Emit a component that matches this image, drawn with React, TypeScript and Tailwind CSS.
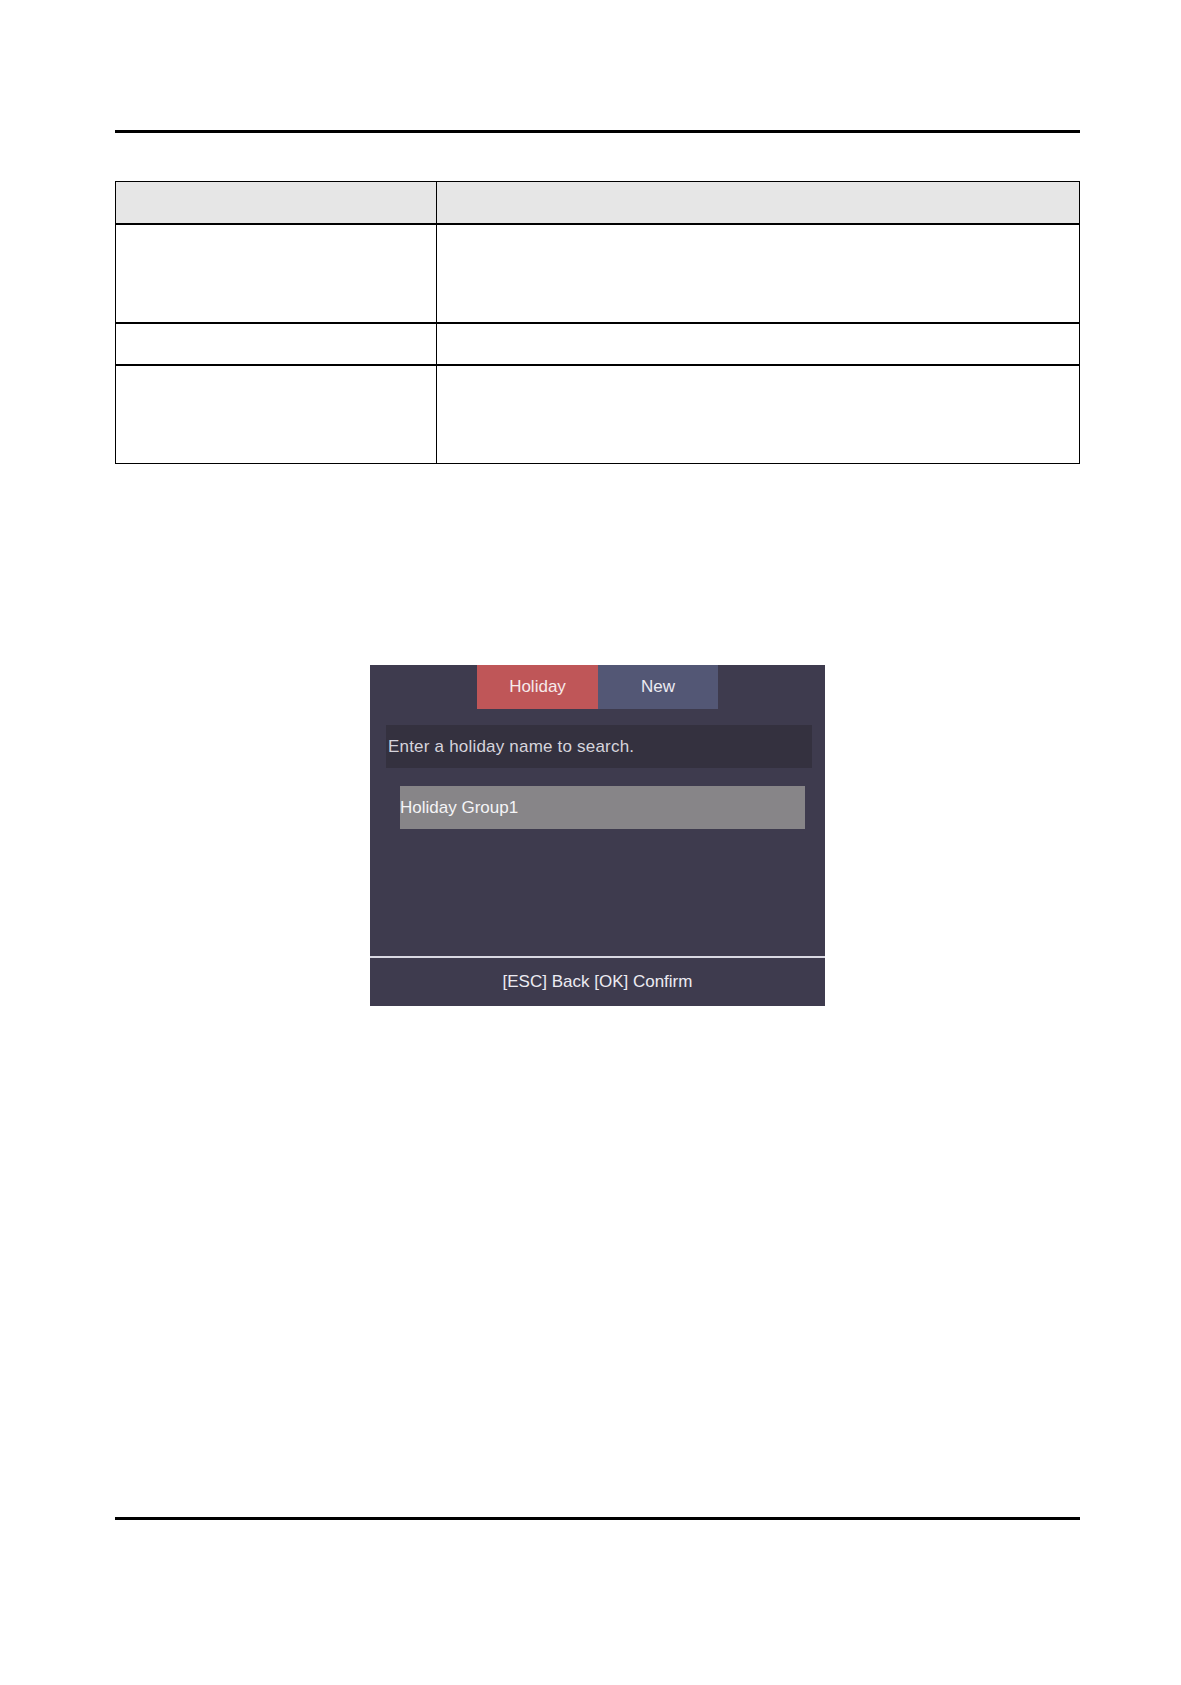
// Manual page: holiday group table + device screen capture
const rows = [
  { h: 'h-[99px]' },
  { h: 'h-[42px]' },
  { h: 'h-[99px]' },
];

function DeviceScreen() {
  return (
    <div className="mx-auto flex h-[341px] w-[455px] flex-col bg-[#3e3b4e] text-[#ecebf2]">
      {/* tabs */}
      <div className="ml-[107px] flex">
        <div className="flex h-[44px] w-[121px] items-center justify-center bg-[#bf5658] text-[17px] text-[#f6e9ea]">
          Holiday
        </div>
        <div className="flex h-[44px] w-[120px] items-center justify-center bg-[#535775] text-[17px]">
          New
        </div>
      </div>

      {/* search */}
      <div className="ml-[16px] mr-[13px] mt-[16px] flex h-[43px] items-center bg-[#34313f] pl-[2px] text-[17px] tracking-[0.2px] text-[#d6d4dc]">
        Enter a holiday name to search.
      </div>

      {/* list */}
      <div className="ml-[30px] mr-[20px] mt-[18px] flex h-[43px] items-center bg-[#878588] text-[17px] text-[#f4f4f6]">
        Holiday Group1
      </div>

      <div className="mt-auto flex h-[50px] items-center justify-center border-t-2 border-[#d9d8e2] text-[17px]">
        [ESC] Back [OK] Confirm
      </div>
    </div>
  );
}

export default function App() {
  return (
    <div
      className="h-[1685px] w-[1181px] bg-white pt-[130px]"
      style={{ fontFamily: '"Liberation Sans", Arial, sans-serif' }}
    >
      <div className="ml-[115px] w-[965px]">
        <div className="h-[3px] bg-black" />

        <div className="mt-[48px] border border-black">
          <div className="grid h-[41px] grid-cols-[321px_1fr] bg-[#e6e6e6]">
            <div className="border-r border-black" />
            <div />
          </div>
          {rows.map((r, i) => (
            <div key={i} className={`grid grid-cols-[321px_1fr] border-t-2 border-black ${r.h}`}>
              <div className="border-r border-black" />
              <div />
            </div>
          ))}
        </div>

        <div className="mt-[201px]">
          <DeviceScreen />
        </div>

        <div className="mt-[511px] h-[3px] bg-black" />
      </div>
    </div>
  );
}
